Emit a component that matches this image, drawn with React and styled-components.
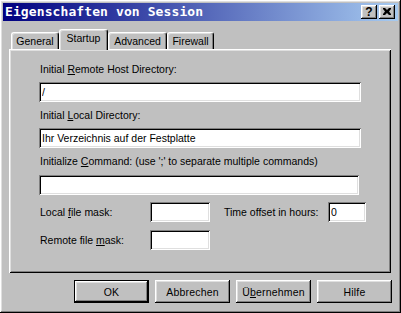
import React from "react";
import styled, { createGlobalStyle } from "styled-components";

const Global = createGlobalStyle`
  html, body {
    margin: 0;
    padding: 0;
    background: #c0c0c0;
  }
  body {
    font-family: "Liberation Sans", Arial, sans-serif;
    font-size: 10.5px;
    color: #000;
  }
`;

const raised = `
  box-shadow: inset -1px -1px #000, inset 1px 1px #fff,
    inset -2px -2px #808080, inset 2px 2px #dfdfdf;
`;

const Window = styled.div`
  width: 401px;
  height: 313px;
  box-sizing: border-box;
  padding: 3px;
  background: #c0c0c0;
  ${raised}
  display: flex;
  flex-direction: column;
`;

const TitleBar = styled.div`
  height: 18px;
  display: flex;
  align-items: center;
  padding: 0 3px 0 2px;
  background: linear-gradient(to right, #000080, #a6caf0);
`;

const Title = styled.div`
  flex: 1;
  color: #fff;
  font-family: "DejaVu Sans Mono", "Liberation Mono", monospace;
  font-weight: bold;
  font-size: 13px;
  line-height: 18px;
  letter-spacing: 0.1px;
`;

const CaptionButton = styled.div`
  width: 16px;
  height: 14px;
  box-sizing: border-box;
  background: #c0c0c0;
  ${raised}
  display: flex;
  align-items: center;
  justify-content: center;
  margin-left: ${({ $gap }) => $gap || 0}px;
  font-family: "Liberation Sans", Arial, sans-serif;
  font-weight: bold;
  font-size: 12px;
  line-height: 14px;
  padding-bottom: 1px;
`;

const TabStrip = styled.div`
  margin: 8px 0 0 8px;
  height: 20px;
  display: flex;
  align-items: flex-end;
`;

const Tab = styled.div`
  position: relative;
  z-index: ${({ $active }) => ($active ? 2 : 0)};
  width: ${({ $w }) => $w}px;
  height: ${({ $active }) => ($active ? 21 : 17)}px;
  margin-bottom: ${({ $active }) => ($active ? -1 : 0)}px;
  box-sizing: border-box;
  background: #c0c0c0;
  border-top: 1px solid #fff;
  border-left: 1px solid #fff;
  border-right: 1px solid #000;
  border-radius: 3px 3px 0 0;
  box-shadow: inset -1px 0 #808080, inset 1px 1px #dfdfdf;
  text-align: center;
  line-height: 16px;
`;

const Panel = styled.div`
  position: relative;
  z-index: 1;
  width: 382px;
  height: 224px;
  margin-left: 6px;
  box-sizing: border-box;
  padding: 14px 30px 0;
  box-shadow: inset 1px 1px #fff, inset -1px -1px #000,
    inset 2px 2px #dfdfdf, inset -2px -2px #808080;
  display: flex;
  flex-direction: column;
`;

const Label = styled.div`
  line-height: 13px;
  height: 13px;
  padding-left: 1px;
  margin-top: ${({ $top }) => $top || 0}px;
  white-space: nowrap;
`;

const Field = styled.input`
  display: block;
  box-sizing: border-box;
  width: ${({ $w }) => $w}px;
  height: 20px;
  margin: ${({ $top }) => $top || 0}px 0 0;
  padding: 0 3px;
  border: none;
  outline: none;
  background: #fff;
  font: inherit;
  color: #000;
  box-shadow: inset 1px 1px #808080, inset -1px -1px #fff,
    inset 2px 2px #000, inset -2px -2px #dfdfdf;
`;

const MaskGrid = styled.div`
  margin-top: 7px;
  display: grid;
  grid-template-columns: 111px 60px 118px 38px;
  grid-auto-rows: 20px;
  row-gap: 8px;
  align-items: center;
`;

const GridLabel = styled.div`
  padding-left: ${({ $pad }) => $pad || 1}px;
  white-space: nowrap;
`;

const ButtonRow = styled.div`
  margin: 7px 6px 0 0;
  display: flex;
  justify-content: flex-end;
  gap: 6px;
`;

const Button = styled.div`
  width: 75px;
  height: 23px;
  box-sizing: border-box;
  background: #c0c0c0;
  ${raised}
  ${({ $default }) =>
    $default &&
    `box-shadow: inset 0 0 0 1px #000, inset -2px -2px #000, inset 2px 2px #fff,
      inset -3px -3px #808080, inset 3px 3px #dfdfdf;`}
  display: flex;
  align-items: center;
  justify-content: center;
  font-size: 10.5px;
  letter-spacing: 0.2px;
`;

const U = styled.span`
  text-decoration: underline;
  text-underline-offset: 1px;
`;

export default function App() {
  return (
    <>
      <Global />
      <Window>
        <TitleBar>
          <Title>Eigenschaften von Session</Title>
          <CaptionButton>?</CaptionButton>
          <CaptionButton $gap={2}>
            <svg width="8" height="7" viewBox="0 0 8 7">
              <path
                d="M0 0h2l2 2 2-2h2v1L6 3.5 8 6v1H6L4 5 2 7H0V6l2-2.5L0 1z"
                fill="#000"
              />
            </svg>
          </CaptionButton>
        </TitleBar>

        <TabStrip>
          <Tab $w={48}>General</Tab>
          <Tab $w={49} $active>
            Startup
          </Tab>
          <Tab $w={59}>Advanced</Tab>
          <Tab $w={47}>Firewall</Tab>
        </TabStrip>

        <Panel>
          <Label>
            Initial <U>R</U>emote Host Directory:
          </Label>
          <Field $w={322} $top={6} readOnly value="/" />
          <Label $top={7}>
            Initial <U>L</U>ocal Directory:
          </Label>
          <Field
            $w={322}
            $top={6}
            readOnly
            value="Ihr Verzeichnis auf der Festplatte"
          />
          <Label $top={7}>
            Initialize <U>C</U>ommand: (use ';' to separate multiple commands)
          </Label>
          <Field $w={320} $top={7} readOnly value="" />
          <MaskGrid>
            <GridLabel>
              Local <U>f</U>ile mask:
            </GridLabel>
            <Field $w={60} readOnly value="" />
            <GridLabel $pad={14}>Time offset in hours:</GridLabel>
            <Field $w={38} readOnly value="0" />
            <GridLabel>
              Remote file <U>m</U>ask:
            </GridLabel>
            <Field $w={60} readOnly value="" />
          </MaskGrid>
        </Panel>

        <ButtonRow>
          <Button $default>OK</Button>
          <Button>Abbrechen</Button>
          <Button>
            Ü<U>b</U>ernehmen
          </Button>
          <Button>Hilfe</Button>
        </ButtonRow>
      </Window>
    </>
  );
}
